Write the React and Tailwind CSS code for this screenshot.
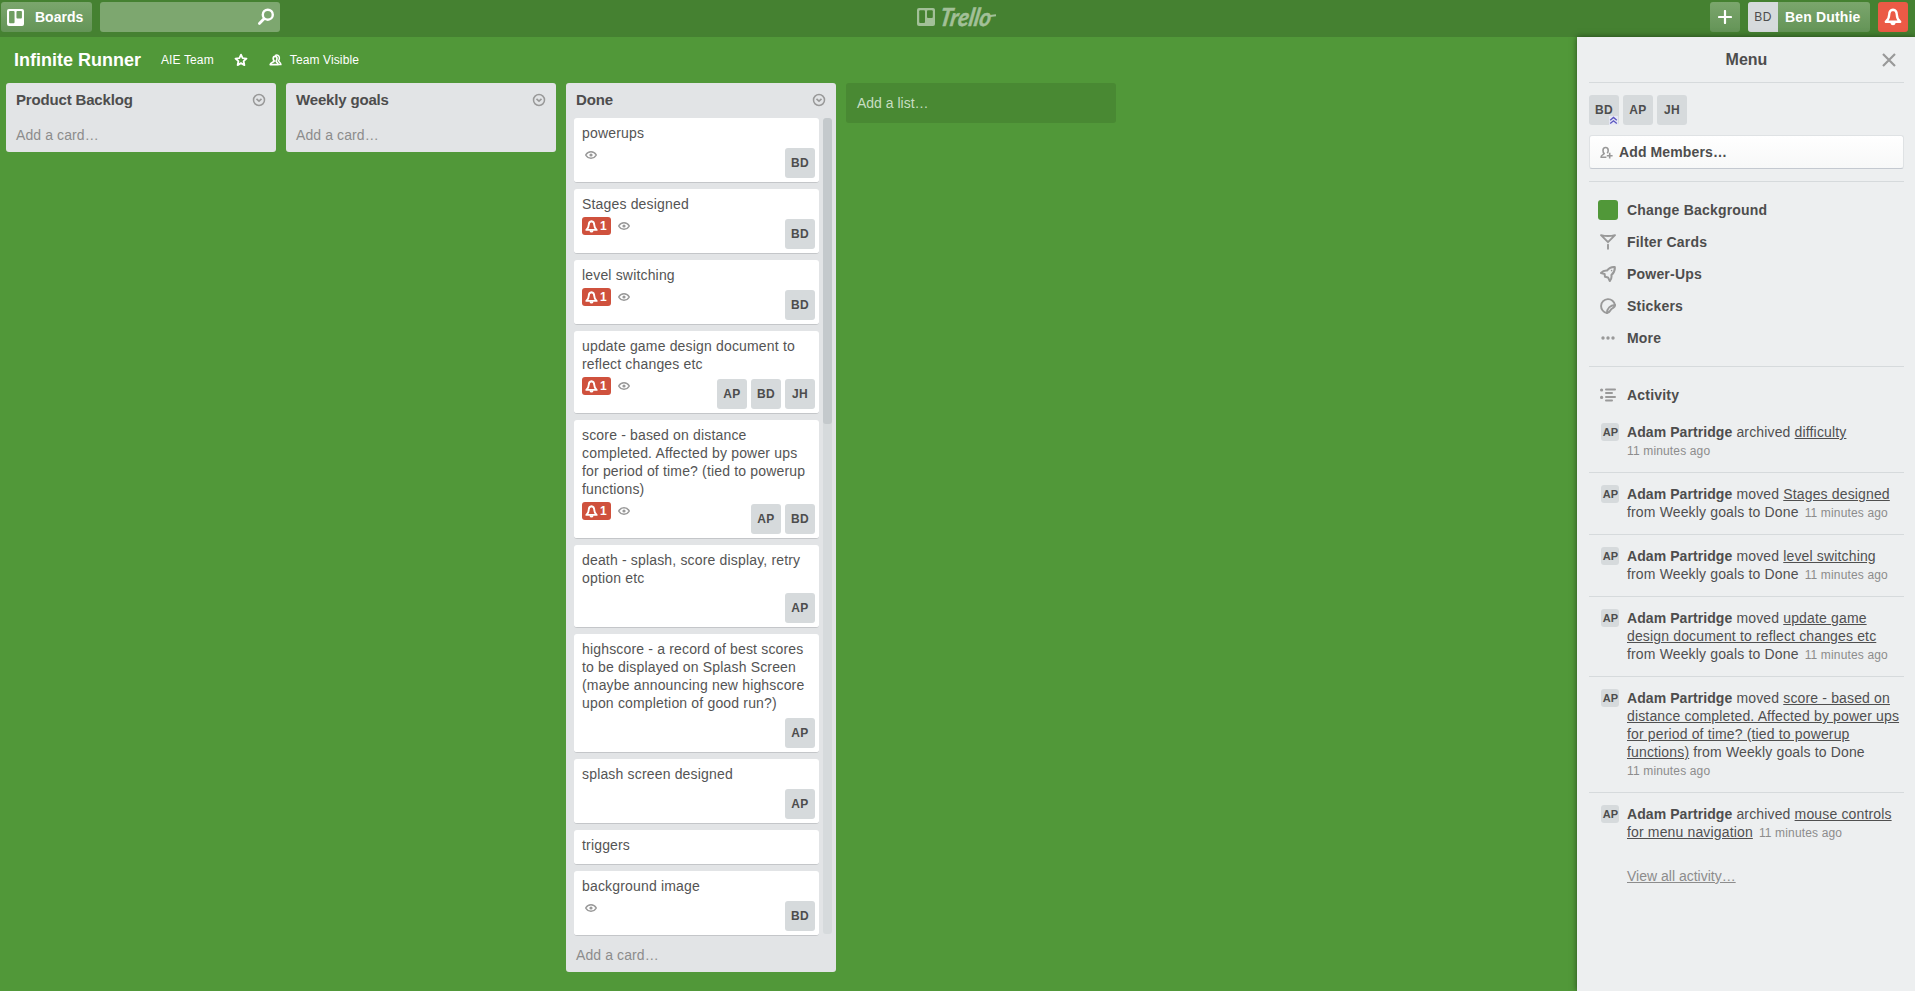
import React from "react";

function BoardMark({ className, cut }) {
  return (
    <svg viewBox="0 0 18 18" className={className}>
      <rect width="18" height="18" rx="2" fill="currentColor" />
      <rect x="2.2" y="2.2" width="5.8" height="12.8" rx="1" fill={cut} />
      <rect x="10" y="2.2" width="5.8" height="7.8" rx="1" fill={cut} />
    </svg>
  );
}

function SearchIcon() {
  return (
    <svg viewBox="0 0 18 18" className="size-[18px]" fill="none" stroke="#fff" strokeLinecap="round">
      <circle cx="10.8" cy="6.7" r="5" strokeWidth="2.4" />
      <path d="M6.8 11L2.4 15.4" strokeWidth="2.8" />
    </svg>
  );
}

function BellIcon({ className, weight }) {
  return (
    <svg viewBox="0 0 16 16" className={className} fill="none" stroke="#fff" strokeWidth={weight} strokeLinejoin="round" strokeLinecap="round">
      <path d="M8 1.6C5.6 1.8 4.7 3.6 4.6 6C4.5 9 3.6 10.8 1.6 12.2H14.4C12.4 10.8 11.5 9 11.4 6C11.3 3.6 10.4 1.8 8 1.6Z" />
      <path d="M6.8 13.6C7 14.6 9 14.6 9.2 13.6" />
    </svg>
  );
}

function StarIcon() {
  return (
    <svg viewBox="0 0 14 14" className="size-[14px]" fill="none" stroke="#fff" strokeWidth="1.8" strokeLinejoin="round">
      <path d="M7 1.6L8.6 5.2L12.5 5.6L9.6 8.2L10.4 12.1L7 10.1L3.6 12.1L4.4 8.2L1.5 5.6L5.4 5.2Z" />
    </svg>
  );
}

function TeamIcon() {
  return (
    <svg viewBox="0 0 13 12" className="h-[12px] w-[13px]" fill="none" stroke="#fff" strokeLinejoin="round">
      <path d="M4.2 4.6C4.2 3.1 5 2.4 6.1 2.4S8 3.1 8 4.6C8 5.8 7.6 6.5 7.1 7C7.3 8.3 9 8.4 9.2 10.6H1.2C1.3 8.4 4.8 8.3 5.2 7C4.5 6.4 4.2 5.6 4.2 4.6Z" strokeWidth="1.7" />
      <path d="M6 1.7C8.2 0.2 10.4 1.6 10.4 4C10.4 5.4 10 6.2 9.5 6.7C9.8 8 11.8 8.2 11.9 10.6H9.8" strokeWidth="1.5" />
    </svg>
  );
}

function EyeIcon() {
  return (
    <svg viewBox="0 0 12 8" className="h-[8px] w-[12px]" fill="none" stroke="#999">
      <path d="M0.7 4C2 1.7 3.8 0.8 6 0.8S10 1.7 11.3 4C10 6.3 8.2 7.2 6 7.2S2 6.3 0.7 4Z" strokeWidth="1.5" />
      <circle cx="6" cy="4" r="1.6" fill="#999" stroke="none" />
    </svg>
  );
}

function ListMenuIcon() {
  return (
    <svg viewBox="0 0 12 12" className="-mt-px size-3 overflow-visible" fill="none" stroke="#999">
      <circle cx="6" cy="6" r="5.5" strokeWidth="1.5" />
      <path d="M3.5 4.9L6 7.2L8.5 4.9" strokeWidth="1.6" />
    </svg>
  );
}

function Avatar({ name }) {
  return (
    <span className="flex size-[30px] shrink-0 items-center justify-center rounded-[3px] bg-[#d6dadc] text-[12px] font-bold tracking-[0.4px] text-[#4d4d4d]">
      {name}
    </span>
  );
}

function Card({ text, alert, eye, members }) {
  return (
    <div className="shrink-0 rounded-[3px] border-b border-[#c4c6c9] bg-white px-2 pt-[6px]">
      <div className="whitespace-pre text-[14px] leading-[18px] tracking-[0.17px] text-[#545454]">{text}</div>
      {members ? (
        <div className="-mr-1 flex h-[40px] items-start justify-between">
          <div className="flex pt-[4px]">
            {alert && (
              <span className="mr-[7px] flex h-[18px] w-[29px] items-center rounded-[3px] bg-[#cf513d] pl-[3px] text-[12px] font-bold text-white">
                <BellIcon className="mr-[2px] size-[13px]" weight={2.3} />1
              </span>
            )}
            {eye && (
              <span className={alert ? "pt-[5px]" : "pl-[3px] pt-[5px]"}>
                <EyeIcon />
              </span>
            )}
          </div>
          <div className="flex gap-1 pt-[6px]">
            {members.map((m) => (
              <Avatar key={m} name={m} />
            ))}
          </div>
        </div>
      ) : (
        <div className="h-[10px]" />
      )}
    </div>
  );
}

function List({ title, children }) {
  return (
    <section className="flex w-[270px] shrink-0 flex-col rounded-[3px] bg-[#e2e4e6]">
      <header className="flex h-[35px] items-center justify-between pl-[10px] pr-[11px]">
        <h2 className="text-[15px] font-bold tracking-[-0.17px] text-[#4d4d4d]">{title}</h2>
        <ListMenuIcon />
      </header>
      {children}
      <footer className="flex h-[34px] items-center pl-[10px] text-[14px] tracking-[0.1px] text-[#8c8c8c]">Add a card…</footer>
    </section>
  );
}

const cards = [
  { text: "powerups", eye: true, members: ["BD"] },
  { text: "Stages designed", alert: true, eye: true, members: ["BD"] },
  { text: "level switching", alert: true, eye: true, members: ["BD"] },
  { text: "update game design document to\nreflect changes etc", alert: true, eye: true, members: ["AP", "BD", "JH"] },
  { text: "score - based on distance\ncompleted. Affected by power ups\nfor period of time? (tied to powerup\nfunctions)", alert: true, eye: true, members: ["AP", "BD"] },
  { text: "death - splash, score display, retry\noption etc", members: ["AP"] },
  { text: "highscore - a record of best scores\nto be displayed on Splash Screen\n(maybe announcing new highscore\nupon completion of good run?)", members: ["AP"] },
  { text: "splash screen designed", members: ["AP"] },
  { text: "triggers" },
  { text: "background image", eye: true, members: ["BD"] },
];

function TopBar() {
  return (
    <header className="flex h-[37px] shrink-0 items-start justify-between bg-[#458131] pl-px pr-[7px] pt-[2px]">
      <div className="flex w-[500px] gap-2">
        <button className="flex h-[30px] w-[91px] items-center rounded-[3px] bg-linear-to-b from-[#7ba66d] to-[#649457] pl-[6px] text-[14px] font-bold text-white">
          <BoardMark className="mr-[11px] size-[17px]" cut="#6f9e61" />
          Boards
        </button>
        <div className="flex h-[30px] w-[180px] items-center justify-end rounded-[3px] bg-[#7da76f] pr-[5px]">
          <SearchIcon />
        </div>
      </div>
      <div className="flex pl-[11px] text-[#a2c098]">
        <BoardMark className="mt-[6px] size-[18px]" cut="#458131" />
        <svg width="64" height="32" className="ml-1 overflow-visible">
          <text x="0" y="23.5" transform="skewX(-10) translate(4 0)" textLength="51" lengthAdjust="spacingAndGlyphs" className="fill-current stroke-current stroke-[0.5px] font-['Lato'] text-[25px] font-bold italic">
            Trello
          </text>
          <path d="M49 14.5Q53 13.5 57 13.2" fill="none" stroke="currentColor" strokeWidth="2" />
        </svg>
      </div>
      <div className="flex w-[500px] justify-end gap-2">
        <span className="flex size-[30px] items-center justify-center rounded-[3px] bg-linear-to-b from-[#7ba66d] to-[#649457]">
          <svg viewBox="0 0 14 14" className="size-[14px]" stroke="#fff" strokeWidth="2.2" strokeLinecap="round">
            <path d="M7 1V13M1 7H13" />
          </svg>
        </span>
        <span className="flex h-[30px] w-[122px] overflow-hidden rounded-[3px] bg-linear-to-b from-[#7ba66d] to-[#649457] text-[14px] font-bold text-white">
          <span className="mr-2 flex w-[30px] items-center justify-center bg-[#d6dadc] text-[12px] font-normal tracking-[0.4px] text-[#4d4d4d]">BD</span>
          <span className="-ml-px flex items-center tracking-[0.15px]">Ben Duthie</span>
        </span>
        <span className="flex size-[30px] items-center justify-center rounded-[3px] bg-[#eb5a46]">
          <BellIcon className="size-[18px]" weight={2.1} />
        </span>
      </div>
    </header>
  );
}

const G = "#999";

function FilterIcon() {
  return (
    <svg viewBox="0 0 16 16" className="size-4" fill="none" stroke={G} strokeWidth="1.9" strokeLinejoin="round" strokeLinecap="round">
      <path d="M1 1.2L8 8.2L15 1.2C11 2.2 5 2.2 1 1.2Z" />
      <path d="M8 10.8V14.8" />
    </svg>
  );
}

function RocketIcon() {
  return (
    <svg viewBox="0 0 16 16" className="size-4" fill="none" stroke={G} strokeWidth="2" strokeLinejoin="round" strokeLinecap="round">
      <path d="M14.8 1C11.4 0.8 9 2.2 7 4.6C4.8 4.4 2.6 5.2 1 7L4.6 8L5 10.8L8 11.4L9.8 15C11.2 13.4 11.8 11.2 11.4 9C13.8 7 15.2 4.4 14.8 1Z" />
      <circle cx="11.6" cy="4.6" r="0.8" fill={G} stroke="none" />
    </svg>
  );
}

function StickerIcon() {
  return (
    <svg viewBox="0 0 16 16" className="size-4" fill="none" stroke={G} strokeWidth="1.9" strokeLinejoin="round" strokeLinecap="round">
      <path d="M7 15A7 7 0 1 1 15 7" />
      <path d="M7 15C7 10.6 10.2 7.4 15 7C15.2 9 13.8 9.8 12 10.6C10 11.4 10.4 14.8 7 15Z" />
    </svg>
  );
}

function MoreIcon() {
  return (
    <svg viewBox="0 0 16 16" className="size-4" fill={G}>
      <circle cx="3" cy="8" r="1.7" />
      <circle cx="8" cy="8" r="1.7" />
      <circle cx="13" cy="8" r="1.7" />
    </svg>
  );
}

function ActivityIcon() {
  return (
    <svg viewBox="0 0 16 16" className="size-4" fill="none" stroke={G} strokeWidth="2" strokeLinecap="round">
      <path d="M6 2.4H15M6 6H12M6 10H15M6 13.5H12" />
      <circle cx="1.6" cy="3" r="1.6" fill={G} stroke="none" />
      <circle cx="1.6" cy="10.4" r="1.6" fill={G} stroke="none" />
    </svg>
  );
}

function MenuRow({ icon, label }) {
  return (
    <div className="flex h-8 items-center text-[14px] font-bold tracking-[0.2px] text-[#4d4d4d]">
      <span className="mr-[9px] flex w-5 justify-center">{icon}</span>
      {label}
    </div>
  );
}

const activity = [
  { verb: "archived", link: ["difficulty"], brk: true },
  { verb: "moved", link: ["Stages designed"], to: "\nfrom Weekly goals to Done" },
  { verb: "moved", link: ["level switching"], to: "\nfrom Weekly goals to Done" },
  { verb: "moved", link: ["update game", "design document to reflect changes etc"], to: "\nfrom Weekly goals to Done" },
  {
    verb: "moved",
    link: ["score - based on", "distance completed. Affected by power ups", "for period of time? (tied to powerup", "functions)"],
    to: " from Weekly goals to Done",
    brk: true,
  },
  { verb: "archived", link: ["mouse controls", "for menu navigation"] },
];

function Menu() {
  return (
    <aside className="flex w-[338px] shrink-0 flex-col bg-[#edeff0] pl-3 pr-[11px] text-[#4d4d4d] shadow-[0_0_6px_rgba(0,0,0,0.5)]">
      <div className="flex h-[46px] shrink-0 items-center border-b border-[#d6dadc]">
        <span className="w-[40px]" />
        <h1 className="flex-1 text-center text-[16px] font-bold">Menu</h1>
        <span className="flex w-[40px] justify-end pr-[8px]">
          <svg viewBox="0 0 14 14" className="size-[14px]" stroke="#999" strokeWidth="2.2">
            <path d="M1 1L13 13M13 1L1 13" />
          </svg>
        </span>
      </div>
      <div className="mt-3 flex gap-1">
        <span className="relative">
          <Avatar name="BD" />
          <svg viewBox="0 0 9 9" className="absolute bottom-0 right-[1px] size-[9px]" fill="none" stroke="#5a55c0" strokeWidth="1.3">
            <rect width="9" height="9" fill="#e6e8f4" stroke="none" />
            <path d="M1.2 4.2L4.5 1.4L7.8 4.2M1.2 7.6L4.5 4.8L7.8 7.6" />
          </svg>
        </span>
        <Avatar name="AP" />
        <Avatar name="JH" />
      </div>
      <div className="mt-[10px] flex h-[34px] items-center rounded-[3px] border border-[#dfe2e4] border-b-[#c4c9d0] bg-linear-to-b from-white to-[#f7f8f8] pl-[10px] text-[14px] font-bold tracking-[0.12px]">
        <svg viewBox="0 0 13 13" className="mr-[6px] size-[13px]" fill="none" stroke="#999" strokeWidth="1.6" strokeLinejoin="round">
          <path d="M6.4 11.2H1C1.1 8.6 3.8 8.8 4.2 7.6C3.4 6.8 3 5.8 3 4.4C3 2.6 4 1.5 5.6 1.5S8.2 2.6 8.2 4.4C8.2 5.4 7.9 6.4 7.2 7.2" />
          <path d="M9.7 6.8V12.6M6.8 9.7H12.6" />
        </svg>
        Add Members…
      </div>
      <div className="mt-3 border-t border-[#d6dadc] py-[12px] pl-[9px]">
        <MenuRow icon={<span className="size-5 rounded-[3px] bg-[#519839]" />} label="Change Background" />
        <MenuRow icon={<FilterIcon />} label="Filter Cards" />
        <MenuRow icon={<RocketIcon />} label="Power-Ups" />
        <MenuRow icon={<StickerIcon />} label="Stickers" />
        <MenuRow icon={<MoreIcon />} label="More" />
      </div>
      <div className="border-t border-[#d6dadc] pl-[9px] pt-[12px]">
        <MenuRow icon={<ActivityIcon />} label="Activity" />
      </div>
      <div className="divide-y divide-[#d6dadc]">
        {activity.map((a) => (
          <div key={a.link[0]} className="flex pb-[13px] pl-3 pt-3 not-last:pb-3">
            <span className="mr-2 flex size-[18px] shrink-0 items-center justify-center rounded-[3px] bg-[#d6dadc] pl-px text-[11px] font-bold">AP</span>
            <p className="whitespace-pre text-[14px] leading-[18px] tracking-[0.15px] text-[#505050]">
              <b className="tracking-[0.08px] text-[#4d4d4d]">Adam Partridge</b> {a.verb}{" "}
              {a.link.map((line, i) => (
                <React.Fragment key={line}>
                  {i > 0 && "\n"}
                  <span className="underline">{line}</span>
                </React.Fragment>
              ))}
              {a.to}
              {a.brk ? "\n" : " "}
              <span className={a.brk ? "text-[12px] text-[#8c8c8c]" : "ml-[2px] text-[12px] text-[#8c8c8c]"}>11 minutes ago</span>
            </p>
          </div>
        ))}
      </div>
      <a className="ml-[38px] mt-[12px] text-[14px] leading-[18px] text-[#8c8c8c] underline">View all activity…</a>
    </aside>
  );
}

export default function App() {
  return (
    <div className="flex h-[991px] w-[1915px] flex-col overflow-hidden bg-[#519839] font-['Liberation_Sans',Arial,sans-serif]">
      <TopBar />
      <div className="flex min-h-0 flex-1">
        <main className="flex flex-1 flex-col">
          <div className="flex h-[46px] items-center pl-[14px] text-[12px] tracking-[0.12px] text-white">
            <h1 className="mr-5 text-[18px] font-bold tracking-normal">Infinite Runner</h1>
            <span className="mr-5">AIE Team</span>
            <StarIcon />
            <span className="ml-[21px] mr-2">
              <TeamIcon />
            </span>
            <span>Team Visible</span>
          </div>
          <div className="flex items-start gap-[10px] pl-[6px]">
            <List title="Product Backlog" />
            <List title="Weekly goals" />
            <List title="Done">
              <div className="flex h-[820px] pl-2 pr-1">
                <div className="flex w-[245px] flex-col gap-[6px]">
                  {cards.map((c) => (
                    <Card key={c.text} {...c} />
                  ))}
                </div>
                <div className="ml-1 h-[816px] w-[9px] overflow-hidden rounded-[3px] bg-[#d6dadc]">
                  <div className="h-[306px] rounded-[3px] bg-[#c4c9cc]" />
                </div>
              </div>
            </List>
            <div className="flex h-10 w-[270px] items-center rounded-[3px] bg-[#498933] pl-[11px] text-[14px] text-[#c8dec2]">Add a list…</div>
          </div>
        </main>
        <Menu />
      </div>
    </div>
  );
}
